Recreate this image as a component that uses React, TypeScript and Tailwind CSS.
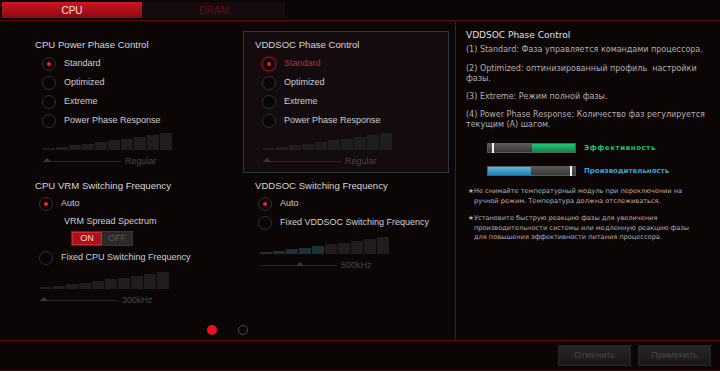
import React from 'react';

// heights of the little staircase meter, left to right
const STEPS = [2, 3, 5, 6, 8, 10, 11, 13, 15, 17];

interface RadioProps {
  label: string;
  checked?: boolean;
  focused?: boolean;
}

function Radio({ label, checked, focused }: RadioProps) {
  return (
    <div className="flex h-[19px] items-center gap-2">
      <span
        className={`flex h-[14px] w-[14px] shrink-0 items-center justify-center rounded-full border-[1.5px] bg-[#090405] ${
          focused ? 'border-[#8e1118] shadow-[0_0_3px_#b3121a]' : 'border-[#343031]'
        }`}
      >
        {checked && <span className="h-[4px] w-[4px] rounded-full bg-[#ff1c1c]" />}
      </span>
      <span className={`whitespace-nowrap text-[9px] ${focused ? 'text-[#c2262d]' : 'text-[#cfcfcf]'}`}>{label}</span>
    </div>
  );
}

function Steps({ lit = 0 }: { lit?: number }) {
  return (
    <div className="flex h-[17px] items-end gap-px">
      {STEPS.map((h, i) => (
        <div
          key={i}
          className={`w-[12px] ${i < lit ? 'bg-[#1b3237]' : 'bg-[#211c1d]'}`}
          style={{ height: h }}
        />
      ))}
    </div>
  );
}

function Slider({ value, pos, width }: { value: string; pos: number; width: number }) {
  return (
    <div className="flex h-[12px] items-center gap-[4px]">
      <div className="relative h-px bg-[#2a2526]" style={{ width }}>
        <span
          className="absolute bottom-0 h-0 w-0 border-x-[4px] border-b-[4px] border-x-transparent border-b-[#3b3637]"
          style={{ left: pos }}
        />
      </div>
      <span className="text-[9px] leading-none text-[#4a4545]">{value}</span>
    </div>
  );
}

function Title({ children }: { children: React.ReactNode }) {
  return <div className="flex h-[14px] items-center whitespace-nowrap text-[9.6px] text-[#d6d6d6]">{children}</div>;
}

function PhaseBox({ title, boxed }: { title: string; boxed?: boolean }) {
  return (
    <div
      className={`w-[206px] border px-[11px] pb-[5px] pt-[6px] ${
        boxed ? 'border-[#2a373b] bg-[#130b0d]' : 'border-transparent'
      }`}
    >
      <Title>{title}</Title>
      <div className="ml-[7px] mt-[2px]">
        <Radio label="Standard" checked focused={boxed} />
        <Radio label="Optimized" />
        <Radio label="Extreme" />
        <Radio label="Power Phase Response" />
      </div>
      <div className="ml-[8px] mt-[3px]">
        <Steps />
      </div>
      <div className="ml-[8px] mt-[5px]">
        <Slider value="Regular" pos={0} width={78} />
      </div>
    </div>
  );
}

export default function App() {
  return (
    <div className="h-[371px] w-[720px] overflow-hidden bg-[#0c0506] font-['Liberation_Sans',Arial,sans-serif]">
      {/* tabs */}
      <div className="flex h-[20px] gap-px bg-[#0a0607] p-[2px]">
        <div className="flex w-[140px] items-center justify-center bg-gradient-to-b from-[#cf1620] to-[#8a0a10] text-[10px] text-[#f3e3e3]">
          CPU
        </div>
        <div className="flex w-[142px] items-center justify-center bg-[#160c0e] text-[10px] text-[#5c0f15]">
          DRAM
        </div>
      </div>
      <div className="h-px bg-[#5a0a0f]" />

      <div className="flex h-[319px]">
        {/* settings */}
        <div className="flex w-[456px] flex-col border-r border-[#2b2727]">
          <div className="mt-[10px] flex gap-[14px] pl-[23px]">
            <PhaseBox title="CPU Power Phase Control" />
            <PhaseBox title="VDDSOC Phase Control" boxed />
          </div>

          <div className="flex gap-[14px] pl-[23px]">
            <div className="w-[206px] px-[12px] pt-[6px]">
              <Title>CPU VRM Switching Frequency</Title>
              <div className="ml-[4px] mt-[1px]">
                <Radio label="Auto" checked />
              </div>
              <div className="ml-[29px] mt-[2px] flex h-[14px] items-center text-[9px] text-[#cfcfcf]">
                VRM Spread Spectrum
              </div>
              <div className="ml-[36px] mt-[2px] flex h-[15px] w-[62px] border border-[#383434]">
                <div className="flex w-1/2 items-center justify-center border border-[#d5252d] bg-[#ad1119] text-[9px] text-[#f2dada]">
                  ON
                </div>
                <div className="flex w-1/2 items-center justify-center bg-[#2a2828] text-[9px] text-[#5a5757]">
                  OFF
                </div>
              </div>
              <div className="ml-[4px] mt-[2px]">
                <Radio label="Fixed CPU Switching Frequency" />
              </div>
              <div className="ml-[5px] mt-[5px]">
                <Steps />
              </div>
              <div className="ml-[5px] mt-[5px]">
                <Slider value="300kHz" pos={0} width={78} />
              </div>
            </div>

            <div className="w-[206px] px-[12px] pt-[6px]">
              <Title>VDDSOC Switching Frequency</Title>
              <div className="ml-[3px] mt-[1px]">
                <Radio label="Auto" checked />
                <Radio label="Fixed VDDSOC Switching Frequency" />
              </div>
              <div className="ml-[5px] mt-[5px]">
                <Steps lit={5} />
              </div>
              <div className="ml-[5px] mt-[5px]">
                <Slider value="500kHz" pos={36} width={77} />
              </div>
            </div>
          </div>

          <div className="mb-[5px] ml-[207px] mt-auto flex h-[10px] gap-[21px]">
            <span className="h-[10px] w-[10px] rounded-full bg-[#e8141c]" />
            <span className="h-[10px] w-[10px] rounded-full border-[1.5px] border-[#4c4848]" />
          </div>
        </div>

        {/* help */}
        <div className="flex-1 pl-[10px] pr-[8px] pt-[7px] font-['DejaVu_Sans',Verdana,sans-serif] text-[8px] leading-[10px] text-[#b3b0b0]">
          <div className="flex h-[14px] items-center text-[9px] text-[#e2e0e0]">VDDSOC Phase Control</div>
          <p className="mt-[3px]">(1) Standard: Фаза управляется командами процессора.</p>
          <p className="mt-[9px]">
            (2) Optimized: оптинизированный профиль&nbsp; настройки
            <br />
            фазы.
          </p>
          <p className="mt-[8px]">(3) Extreme: Режим полной фазы.</p>
          <p className="mt-[8px]">
            (4) Power Phase Response: Количество фаз регулируется
            <br />
            текущим (А) шагом.
          </p>

          <div className="ml-[21px] mt-[13px] flex items-center gap-[8px]">
            <div className="relative h-[10px] w-[89px] border border-[#5a5757] bg-gradient-to-b from-[#5a5858] to-[#3a3838]">
              <div className="absolute inset-y-0 right-0 w-[43px] bg-gradient-to-b from-[#22c477] to-[#0c8a4c]" />
              <div className="absolute inset-y-[-1px] left-[4px] w-[2px] bg-[#f2f2f2]" />
            </div>
            <span className="text-[7px] font-bold tracking-[0.6px] text-[#1fbf72]">Эффективность</span>
          </div>
          <div className="ml-[21px] mt-[13px] flex items-center gap-[8px]">
            <div className="relative h-[10px] w-[89px] border border-[#5a5757] bg-gradient-to-b from-[#5a5858] to-[#3a3838]">
              <div className="absolute inset-y-0 left-0 w-[43px] bg-gradient-to-b from-[#54b8e4] to-[#2a82b0]" />
              <div className="absolute inset-y-[-1px] right-[3px] w-[2px] bg-[#f2f2f2]" />
            </div>
            <span className="text-[7px] font-bold text-[#3ea6d2]">Производительность</span>
          </div>

          <div className="ml-[2px] mt-[11px] flex text-[6.6px] leading-[9.5px]">
            <span className="w-[6px] shrink-0">★</span>
            <p>
              Не снимайте температурный модуль при переключении на
              <br />
              ручной режим. Температура должна отслеживаться.
            </p>
          </div>
          <div className="ml-[2px] mt-[8px] flex text-[6.6px] leading-[9.5px]">
            <span className="w-[6px] shrink-0">★</span>
            <p>
              Установите быструю реакцию фазы для увеличения
              <br />
              производительности системы или медленную реакцию фазы
              <br />
              для повышения эффективности питания процессора.
            </p>
          </div>
        </div>
      </div>

      <div className="h-px bg-[#5a0a0f]" />
      <div className="flex h-[29px] justify-end gap-[7px] pr-[9px] pt-[4px]">
        <button className="h-[21px] w-[73px] border border-[#262424] bg-gradient-to-b from-[#262424] to-[#1a1818] text-[9px] text-[#4a4747]">
          Отменить
        </button>
        <button className="h-[21px] w-[73px] border border-[#262424] bg-gradient-to-b from-[#262424] to-[#1a1818] text-[9px] text-[#4a4747]">
          Применить
        </button>
      </div>
      <div className="h-px bg-[#3a0609]" />
    </div>
  );
}
